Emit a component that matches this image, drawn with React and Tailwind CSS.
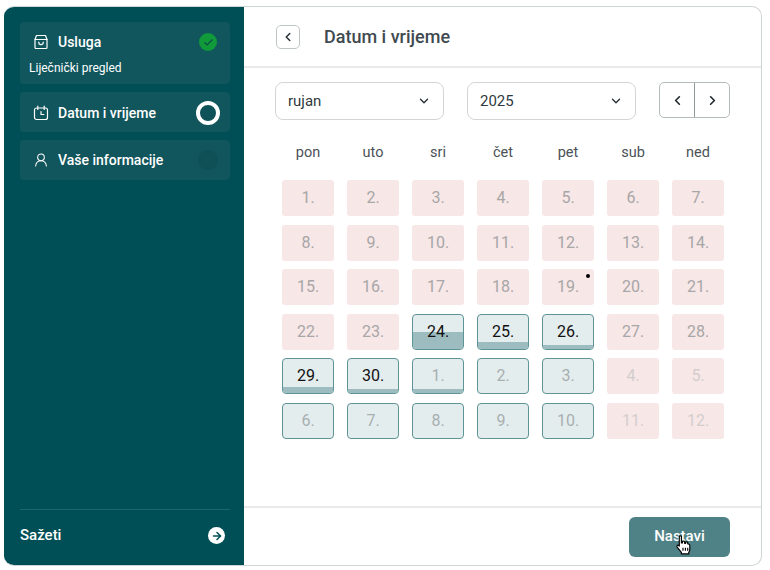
import { ChevronDown, ChevronLeft, ChevronRight, Check, ArrowRight, UserRound } from "lucide-react";

const weekDays = ["pon", "uto", "sri", "čet", "pet", "sub", "ned"];

// kind: off = blocked day, open = bookable day, fill = px of the busy bar
const days = [
  ...[1, 2, 3, 4, 5, 6, 7, 8, 9, 10, 11, 12, 13, 14, 15, 16, 17, 18, 19, 20, 21, 22, 23].map((n) => ({ n, kind: "off" })),
  { n: 24, kind: "open", active: true, fill: 17 },
  { n: 25, kind: "open", active: true, fill: 7 },
  { n: 26, kind: "open", active: true, fill: 4 },
  { n: 27, kind: "off" },
  { n: 28, kind: "off" },
  { n: 29, kind: "open", active: true, fill: 6 },
  { n: 30, kind: "open", active: true, fill: 4 },
  { n: 1, kind: "open", fill: 4 },
  { n: 2, kind: "open" },
  { n: 3, kind: "open" },
  { n: 4, kind: "off", faint: true },
  { n: 5, kind: "off", faint: true },
  { n: 6, kind: "open" },
  { n: 7, kind: "open" },
  { n: 8, kind: "open" },
  { n: 9, kind: "open" },
  { n: 10, kind: "open" },
  { n: 11, kind: "off", faint: true },
  { n: 12, kind: "off", faint: true },
];

function BagIcon() {
  return (
    <svg width="16" height="16" viewBox="0 0 16 16" fill="none" stroke="white" strokeWidth="1.2" strokeLinejoin="round" strokeLinecap="round">
      <path d="M3.5 1.5h9l1.5 4v8a1 1 0 0 1-1 1H3a1 1 0 0 1-1-1v-8z" />
      <path d="M2 5.5h12" />
      <path d="M5.8 8v.5a2.2 2.2 0 0 0 4.4 0V8" />
    </svg>
  );
}

function CalendarIcon() {
  return (
    <svg width="16" height="16" viewBox="0 0 16 16" fill="none" stroke="white" strokeWidth="1.2" strokeLinejoin="round" strokeLinecap="round">
      <rect x="1.5" y="3" width="13" height="11.5" rx="2" />
      <path d="M4.8 1.2v3.2M11.2 1.2v3.2" />
      <path d="M8 6.5v3h2.8" />
    </svg>
  );
}

function HandCursor() {
  return (
    <svg className="absolute left-[46px] top-[18px]" width="17" height="20" viewBox="0 0 16 19" fill="white" stroke="black" strokeWidth="1.1" strokeLinejoin="round">
      <path d="M4 1.500c0-1 2-1 2 0v6l1 .1V6.500c0-1 2-1 2 0v1.300l1 .2V7.200c0-1 2-1 2 0v1.200l.8.2c.8.2 1.200.8 1.200 1.600v3.300c0 1.400-.6 2.200-1 3v1.500H6v-1.500c-1-1.200-2.500-3-4-5-.8-1.200.6-2.400 1.600-1.400l.4.5z" />
      <path d="M7.500 12v3M9.800 12v3M12 12v3" fill="none" />
    </svg>
  );
}

function DayCell({ day }) {
  if (day.kind === "off") {
    return (
      <div className={`flex h-9 items-center justify-center rounded-[3px] bg-[#f7e7e7] text-[16px] ${day.faint ? "text-[#d3cdcd]" : "text-[#a8a6a6]"}`}>
        {day.n}.
      </div>
    );
  }
  return (
    <div className={`relative flex h-9 items-center justify-center overflow-hidden rounded-[4px] border border-[#5f9497] bg-[#e4edee] text-[16px] ${day.active ? "text-[#111111]" : "text-[#a8afb0]"}`}>
      {day.fill && <div className="absolute inset-x-0 bottom-0 bg-[#9dbcbf]" style={{ height: day.fill }} />}
      <span className="relative">{day.n}.</span>
    </div>
  );
}

function MonthSelect({ label }) {
  return (
    <div className="flex h-[38px] w-[169px] items-center justify-between rounded-lg border border-[#d3d6d7] pl-3 pr-[12px] text-[15px] text-[#2f3a40]">
      <span>{label}</span>
      <ChevronDown size={14} strokeWidth={2.4} className="text-[#2a3338]" />
    </div>
  );
}

export default function App() {
  return (
    <div className="h-[570px] w-[770px] bg-white pl-1 pt-1.5 font-['Roboto',sans-serif]">
      <div className="flex h-[560px] w-[758px] overflow-hidden rounded-[10px] border-r border-b border-t border-[#cfd4d5] bg-white">
        <aside className="flex w-[240px] shrink-0 flex-col bg-[#004f56] pl-4 pr-[14px] pt-[15px] text-white">
          <div className="flex flex-col gap-2">
            <div className="h-[62px] rounded-[4px] bg-[#11565c] pl-[9px] pr-[13px] pt-2">
              <div className="flex h-6 items-center justify-between">
                <div className="flex items-center gap-[9px] pl-1">
                  <BagIcon />
                  <span className="text-[14px] font-medium">Usluga</span>
                </div>
                <div className="flex h-[18px] w-[18px] items-center justify-center rounded-full bg-[#109a3a]">
                  <Check size={11} strokeWidth={2.5} className="text-[#0b4d48]" />
                </div>
              </div>
              <p className="mt-[5px] text-[12px]">Liječnički pregled</p>
            </div>
            <div className="flex h-10 items-center justify-between rounded-[4px] bg-[#11565c] pl-[13px] pr-[10px] pt-0.5">
              <div className="flex items-center gap-[9px]">
                <CalendarIcon />
                <span className="text-[14px] font-medium">Datum i vrijeme</span>
              </div>
              <div className="h-6 w-6 rounded-full border-4 border-white bg-[#0f5158]" />
            </div>
            <div className="flex h-10 items-center justify-between rounded-[4px] bg-[#11565c] pl-[13px] pr-3">
              <div className="flex items-center gap-[9px]">
                <UserRound size={16} strokeWidth={1.6} />
                <span className="text-[14px] font-medium">Vaše informacije</span>
              </div>
              <div className="h-5 w-5 rounded-full bg-[#0f4f56]" />
            </div>
          </div>
          <div className="mb-1 mt-auto flex h-[52px] items-center justify-between border-t border-[#1f666c] pr-[5px]">
            <span className="text-[15px] font-medium">Sažeti</span>
            <div className="flex h-[17px] w-[17px] items-center justify-center rounded-full bg-white">
              <ArrowRight size={12} strokeWidth={3} className="text-[#004f56]" />
            </div>
          </div>
        </aside>

        <main className="flex min-w-0 flex-1 flex-col">
          <header className="flex h-[61px] shrink-0 items-center gap-6 border-b-2 border-[#e9ebeb] pl-8">
            <button className="flex h-6 w-6 items-center justify-center rounded-[5px] border border-[#bfc5c6]">
              <ChevronLeft size={14} strokeWidth={2.6} className="text-[#2a3338]" />
            </button>
            <h1 className="text-[18px] font-medium text-[#3f4a50]">Datum i vrijeme</h1>
          </header>

          <section className="relative flex-1 pl-[31px] pt-[14px]">
            <div className="flex items-start">
              <MonthSelect label="rujan" />
              <div className="ml-[23px]">
                <MonthSelect label="2025" />
              </div>
              <div className="ml-[23px] flex h-9 w-[71px] rounded-[5px] border border-[#b3baba]">
                <button className="flex flex-1 items-center justify-center border-r border-[#8f9a9b]">
                  <ChevronLeft size={15} strokeWidth={2.6} className="text-[#1f282c]" />
                </button>
                <button className="flex flex-1 items-center justify-center">
                  <ChevronRight size={15} strokeWidth={2.6} className="text-[#1f282c]" />
                </button>
              </div>
            </div>

            <div className="ml-[7px] w-[442px]">
              <div className="mt-[23px] grid h-5 grid-cols-7 gap-x-[13px] text-center text-[14.5px] leading-5 text-[#4a5257]">
                {weekDays.map((d) => (
                  <div key={d}>{d}</div>
                ))}
              </div>
              <div className="mt-[17px] grid grid-cols-7 gap-x-[13px] gap-y-[8.6px]">
                {days.map((day, i) => (
                  <DayCell key={i} day={day} />
                ))}
              </div>
            </div>
            <div className="absolute left-[342px] top-[206px] h-1 w-1 rounded-full bg-black" />
          </section>

          <footer className="flex h-[59px] shrink-0 items-center justify-end border-t-2 border-[#e9ebeb] pr-[31px]">
            <button className="relative h-10 w-[101px] rounded-md bg-[#4f8287] text-[15px] font-medium text-white">
              Nastavi
              <HandCursor />
            </button>
          </footer>
        </main>
      </div>
    </div>
  );
}
